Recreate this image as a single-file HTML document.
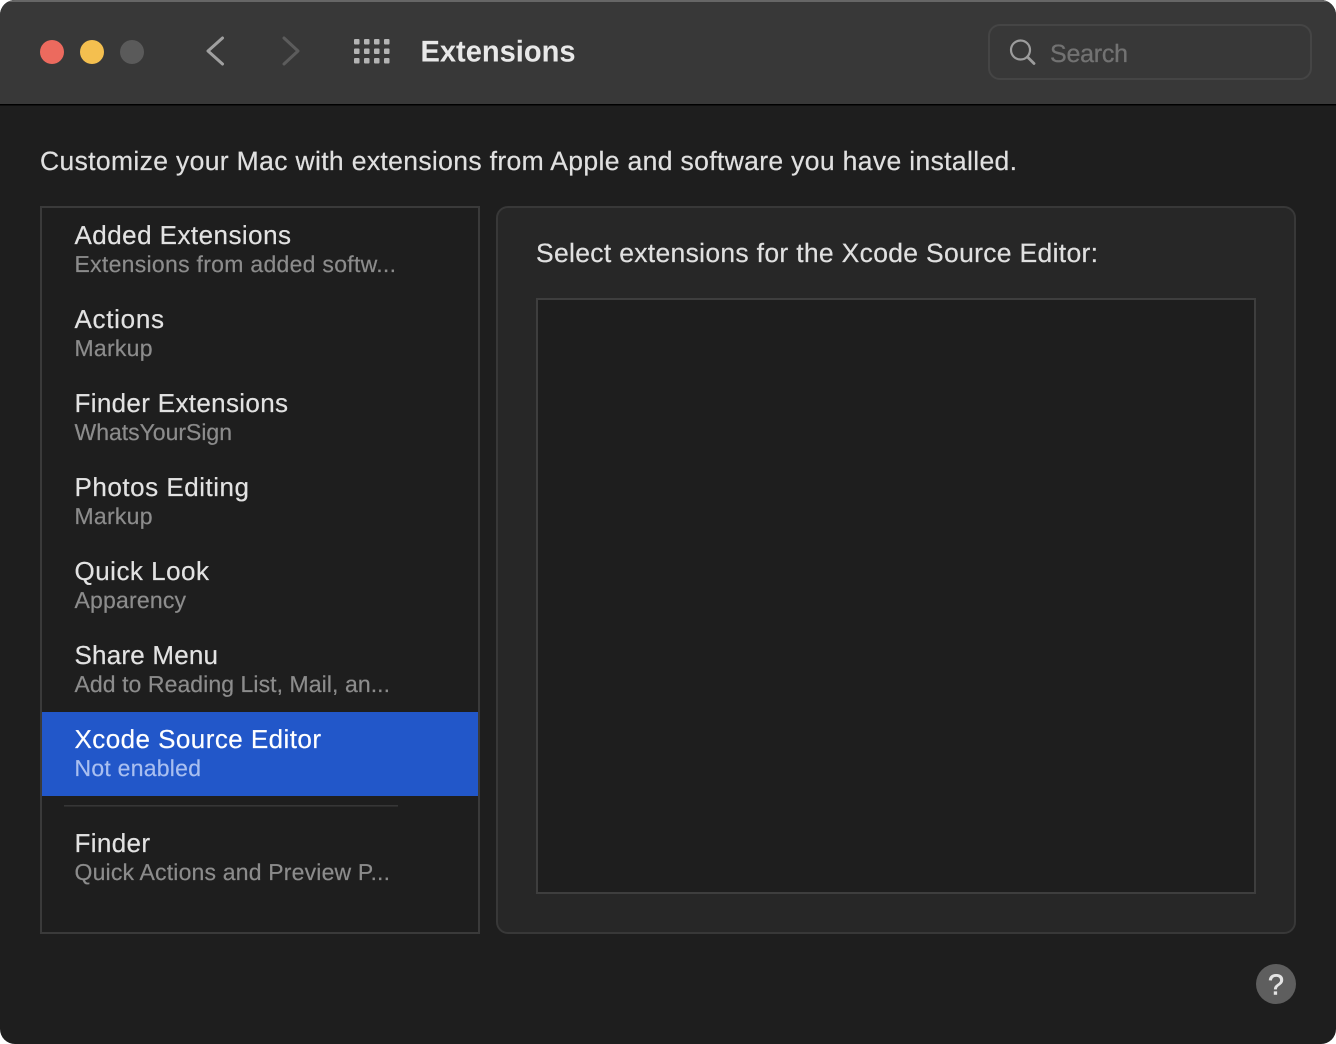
<!DOCTYPE html>
<html>
<head>
<meta charset="utf-8">
<title>Extensions</title>
<style>
html,body{margin:0;padding:0;background:#fff;width:1336px;height:1044px;overflow:hidden}
svg{display:block}
text{font-family:"Liberation Sans",sans-serif;text-rendering:geometricPrecision}
.t{font-size:26px;fill:#e2e2e2;stroke:#e2e2e2;stroke-width:.2px}
.s{font-size:23px;fill:#8c8c8c;stroke:#8c8c8c;stroke-width:.2px}
</style>
</head>
<body>
<svg width="1336" height="1044" viewBox="0 0 1336 1044" xmlns="http://www.w3.org/2000/svg">
  <defs>
    <clipPath id="win"><rect x="0" y="0" width="1336" height="1044" rx="15" ry="15"/></clipPath>
  </defs>
  <g clip-path="url(#win)">
    <rect width="1336" height="1044" fill="#1e1e1e"/>
    <rect width="1336" height="104" fill="#383838"/>
    <rect width="1336" height="2" fill="#666666"/>
    <rect y="104" width="1336" height="1.5" fill="#000000"/>

    <circle cx="52" cy="52" r="12" fill="#ec6a5e"/>
    <circle cx="92" cy="52" r="12" fill="#f4bf4f"/>
    <circle cx="132" cy="52" r="12" fill="#5a5a5a"/>

    <path d="M222.5 38L208 51L222.5 64" fill="none" stroke="#a0a0a0" stroke-width="3" stroke-linecap="round" stroke-linejoin="round"/>
    <path d="M284 38L298 51L284 64" fill="none" stroke="#5c5c5c" stroke-width="3" stroke-linecap="round" stroke-linejoin="round"/>

    <g fill="#b4b4b4">
      <rect x="354" y="39" width="5.5" height="5.5" rx="1"/><rect x="364" y="39" width="5.5" height="5.5" rx="1"/><rect x="374" y="39" width="5.5" height="5.5" rx="1"/><rect x="384" y="39" width="5.5" height="5.5" rx="1"/>
      <rect x="354" y="48.5" width="5.5" height="5.5" rx="1"/><rect x="364" y="48.5" width="5.5" height="5.5" rx="1"/><rect x="374" y="48.5" width="5.5" height="5.5" rx="1"/><rect x="384" y="48.5" width="5.5" height="5.5" rx="1"/>
      <rect x="354" y="58" width="5.5" height="5.5" rx="1"/><rect x="364" y="58" width="5.5" height="5.5" rx="1"/><rect x="374" y="58" width="5.5" height="5.5" rx="1"/><rect x="384" y="58" width="5.5" height="5.5" rx="1"/>
    </g>

    <text x="420.5" y="61.5" font-size="30" font-weight="700" fill="#e8e8e8" textLength="155" lengthAdjust="spacingAndGlyphs">Extensions</text>

    <rect x="989" y="25" width="322" height="54" rx="11" fill="#383838" stroke="#454545" stroke-width="2"/>
    <circle cx="1020.5" cy="50" r="9.5" fill="none" stroke="#9c9c9c" stroke-width="2.2"/>
    <path d="M1027.5 57L1034 63.5" fill="none" stroke="#9c9c9c" stroke-width="2.8" stroke-linecap="round"/>
    <text x="1050" y="62" font-size="25" fill="#727272" stroke="#727272" stroke-width=".3" textLength="78">Search</text>

    <text x="40" y="170" font-size="26.5" fill="#e0e0e0" stroke="#e0e0e0" stroke-width=".2" textLength="977">Customize your Mac with extensions from Apple and software you have installed.</text>

    <rect x="41" y="207" width="438" height="726" fill="#1e1e1e" stroke="#3a3a3a" stroke-width="2"/>
    <rect x="42" y="712" width="436" height="84" fill="#2257c9"/>
    <rect x="64" y="805" width="334" height="1.6" fill="#363636"/>

    <text class="t" x="74.5" y="244" textLength="216.5">Added Extensions</text>
    <text class="s" x="74.5" y="272" textLength="321.5">Extensions from added softw...</text>
    <text class="t" x="74.5" y="328" textLength="89.5">Actions</text>
    <text class="s" x="74.5" y="356" textLength="78">Markup</text>
    <text class="t" x="74.5" y="412" textLength="213.5">Finder Extensions</text>
    <text class="s" x="74.5" y="440" textLength="157.5">WhatsYourSign</text>
    <text class="t" x="74.5" y="496" textLength="174.5">Photos Editing</text>
    <text class="s" x="74.5" y="524" textLength="78">Markup</text>
    <text class="t" x="74.5" y="580" textLength="134.5">Quick Look</text>
    <text class="s" x="74.5" y="608" textLength="111.5">Apparency</text>
    <text class="t" x="74.5" y="664" textLength="143.5">Share Menu</text>
    <text class="s" x="74.5" y="692" textLength="315.5">Add to Reading List, Mail, an...</text>
    <text class="t" x="74.5" y="748" textLength="246.5" style="fill:#fff;stroke:#fff">Xcode Source Editor</text>
    <text class="s" x="74.5" y="776" textLength="126.5" style="fill:#a9bff0;stroke:#a9bff0">Not enabled</text>
    <text class="t" x="74.5" y="852" textLength="75.5">Finder</text>
    <text class="s" x="74.5" y="880" textLength="315.5">Quick Actions and Preview P...</text>

    <rect x="497" y="207" width="798" height="726" rx="11" fill="#272727" stroke="#383838" stroke-width="2"/>
    <text x="536" y="262" font-size="26.5" fill="#e0e0e0" stroke="#e0e0e0" stroke-width=".2" textLength="562">Select extensions for the Xcode Source Editor:</text>
    <rect x="537" y="299" width="718" height="594" fill="#1e1e1e" stroke="#3e3e3e" stroke-width="2"/>

    <circle cx="1276" cy="984" r="20" fill="#5e5e5e"/>
    <text x="1276" y="994.5" font-size="29" fill="#e4e4e4" stroke="#e4e4e4" stroke-width=".5" text-anchor="middle">?</text>
  </g>
</svg>
</body>
</html>
